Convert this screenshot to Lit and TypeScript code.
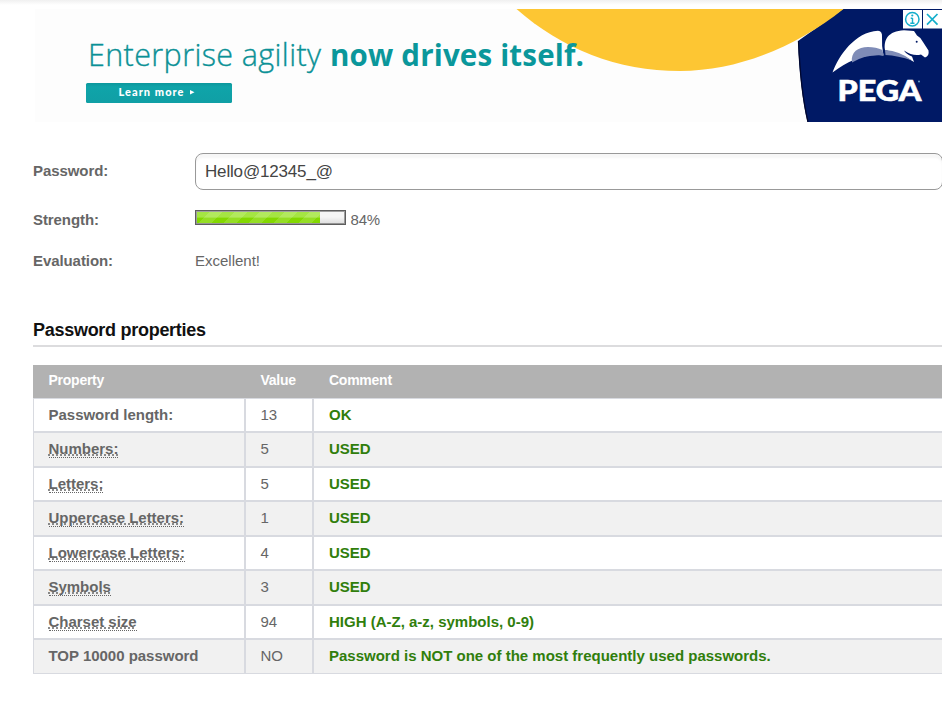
import { LitElement, html, css } from "lit";
import { customElement, property } from "lit/decorators.js";
import { classMap } from "lit/directives/class-map.js";

interface Row {
  name: string;
  value: string;
  comment: string;
  hint?: boolean;
}

const ROWS: Row[] = [
  { name: "Password length:", value: "13", comment: "OK" },
  { name: "Numbers:", value: "5", comment: "USED", hint: true },
  { name: "Letters:", value: "5", comment: "USED", hint: true },
  { name: "Uppercase Letters:", value: "1", comment: "USED", hint: true },
  { name: "Lowercase Letters:", value: "4", comment: "USED", hint: true },
  { name: "Symbols", value: "3", comment: "USED", hint: true },
  { name: "Charset size", value: "94", comment: "HIGH (A-Z, a-z, symbols, 0-9)", hint: true },
  { name: "TOP 10000 password", value: "NO", comment: "Password is NOT one of the most frequently used passwords." },
];

@customElement("ad-banner")
class AdBanner extends LitElement {
  static styles = css`
    :host { display: block; height: 113px; }
    svg { display: block; }
    .headline { font-family: "Open Sans", sans-serif; font-size: 30.500px; fill: #0b9196; }
    .light { font-weight: 300; stroke: #0b9196; stroke-width: 0.350px; }
    .strong { font-weight: 700; font-size: 29.500px; fill: #0a979b; }
    .cta { font: 900 11px Lato, sans-serif; fill: #fff; }
    .brand { font: 900 29px Lato, sans-serif; fill: #fff; stroke: #fff; stroke-width: 0.600px; }
  `;
  render() {
    return html`
      <svg width="907" height="113" viewBox="35 9 907 113">
        <defs>
          <linearGradient id="btn" x1="0" y1="0" x2="0" y2="1">
            <stop offset="0" stop-color="#0c979c" />
            <stop offset=".2" stop-color="#0fa4a9" />
            <stop offset="1" stop-color="#109fa5" />
          </linearGradient>
        </defs>
        <rect x="35" y="9" width="907" height="113" fill="#fdfdfd" />
        <path d="M798 41L843 9H942V122H807.500Q800 90 798 41Z" fill="#001965" />
        <path d="M798.500 41Q800.500 90 808 122" fill="none" stroke="#00072e" stroke-width="1.300" />
        <path d="M516.500 9C562 49 617 71 680 71C739 71 797 46 843.500 9Z" fill="#fdc633" />
        <text class="headline light" x="88" y="65.500" textLength="233">Enterprise agility</text>
        <text class="headline strong" x="330" y="65.500" textLength="254">now drives itself.</text>
        <rect x="86" y="83" width="146" height="20" rx="1.500" fill="url(#btn)" />
        <text class="cta" x="118.500" y="96" textLength="65">Learn more</text>
        <path d="M190 90L194.500 92.200L190 94.500Z" fill="#fff" />
        <path d="M832.500 72.500C839 55 855 32 878 30.700Q882.500 31 882 37Q881.500 46 883.500 55.500C866 53 849 60 832.500 72.500Z" fill="#fff" />
        <path d="M852 62.500C850.500 52 858 47 868 47Q876 47 882.500 50L883.500 55.500Q866 54 852 62.500Z" fill="#7f8cb7" />
        <path d="M885 50C883.500 40 888 31 904 30.300L914 31L917 35.500Q921 37.500 923 42L928.500 50.500Q929.500 56 925 57.500L921 54.500Q913 56.500 904 50.500Q906 54 912 56.500L914 62Q900 53 885 50Z" fill="#fff" />
        <path d="M885 50Q900 51 912 60.500Q898 55.500 885.500 55Z" fill="#7f8cb7" />
        <circle cx="916.700" cy="41.700" r="1" fill="#001965" />
        <text class="brand" x="837.500" y="101" textLength="84" lengthAdjust="spacingAndGlyphs">PEGA</text>
        <circle cx="919" cy="81.500" r="1" fill="#6f9ec6" />
        <path d="M903 10H922V28.500H903ZM923 10H942V28.500H923Z" fill="#fff" />
        <g fill="none" stroke="#14aecb" stroke-width="1.500">
          <circle cx="912.300" cy="19.300" r="6.700" />
          <path d="M927 14L937.500 24.700M937.500 14L927 24.700" stroke-width="1.700" />
          <path d="M912.500 18V23.500M910.700 18.200H912.500M910.300 23.200H914.500" stroke-width="1.400" />
        </g>
        <circle cx="912.300" cy="15.500" r="1.100" fill="#14aecb" />
      </svg>
    `;
  }
}

@customElement("strength-meter")
class StrengthMeter extends LitElement {
  @property({ type: Number }) value = 0;
  static styles = css`
    :host { display: flex; gap: 4.500px; }
    .track {
      box-sizing: border-box; width: 151px; height: 15px; padding: 1px; border: 1px solid #5e5e5e;
      box-shadow: inset 0 0 0 1px rgba(90, 90, 90, .55);
      background: linear-gradient(#f6f6f6 45%, #dcdcdc);
      display: flex;
    }
    .fill {
      background:
        repeating-linear-gradient(135deg, transparent 0 8.800px, rgba(255,255,255,.14) 8.800px 17.700px),
        linear-gradient(#a5e544 0 45%, #83d800 58%);
    }
    .label { font-size: 15px; line-height: 20px; color: #666; letter-spacing: -.2px; }
  `;
  render() {
    return html`
      <div class="track"><div class="fill" style="width:${this.value}%"></div></div>
      <span class="label">${this.value}%</span>
    `;
  }
}

@customElement("app-root")
class AppRoot extends LitElement {
  static styles = css`
    :host {
      display: block; width: 942px; height: 709px; overflow: hidden; background: #fff;
      font-family: "Liberation Sans", Arial, sans-serif; font-size: 15px; color: #666;
    }
    .shade { height: 9px; background: linear-gradient(#f0f0f0, #fff 5px); }
    .banner { margin-left: 35px; }
    .form {
      display: grid; grid-template-columns: 162px 748px; grid-template-rows: 37px 59px 24px;
      margin: 31px 0 0 33px; line-height: 18px;
    }
    .label { font-weight: 700; letter-spacing: -.08px; }
    .first { padding-top: 9px; }
    .second { padding-top: 21px; }
    .third { padding-top: 3px; }
    .field {
      box-sizing: border-box; height: 37px; padding: 0 9px; border: 1px solid #999; border-radius: 8px;
      box-shadow: inset 0 4px 2px #f7f7f7; color: #444; font-size: 17px; line-height: 35px;
      letter-spacing: -.17px;
    }
    .meter { padding-top: 20px; }
    .title {
      margin: 46px 0 0 33px; height: 26px; border-bottom: 2px solid #dcdcde;
      font-size: 18px; line-height: 22px; font-weight: 700; color: #111; letter-spacing: -.28px;
    }
    .table { width: 940px; margin: 18px 0 0 33px; }
    .row { display: grid; grid-template-columns: 212px 68px 660px; height: 34px; line-height: 32px; }
    .row.tall { height: 35px; }
    .row.head {
      height: 33px; line-height: 31px; background: #b2b2b2; color: #fff;
      font-weight: 700; font-size: 14px; letter-spacing: -.25px;
    }
    .cell { box-sizing: border-box; padding-left: 14.500px; border: 1px solid #d8dae0; white-space: nowrap; }
    .head .cell { border: 0; padding-left: 15.500px; }
    .alt .cell { background: #f1f1f1; }
    .name { font-weight: 700; letter-spacing: -.02px; }
    .row .comment { padding-left: 15px; font-weight: 700; color: #307e0c; }
    .head .last { padding-left: 16px; }
    .hint { text-decoration: underline dotted #666; border-bottom: 1px dotted #666; }
  `;
  render() {
    return html`
      <div class="shade"></div>
      <ad-banner class="banner"></ad-banner>
      <div class="form">
        <div class="label first">Password:</div>
        <div class="field">Hello@12345_@</div>
        <div class="label second">Strength:</div>
        <strength-meter class="meter" .value=${84}></strength-meter>
        <div class="label third">Evaluation:</div>
        <div class="third">Excellent!</div>
      </div>
      <div class="title">Password properties</div>
      <div class="table">
        <div class="row head">
          <div class="cell">Property</div>
          <div class="cell">Value</div>
          <div class="cell last">Comment</div>
        </div>
        ${ROWS.map((r, i) => html`
          <div class=${classMap({ row: true, tall: i % 2 === 1, alt: i % 2 === 1 })}>
            <div class="cell name">${r.hint ? html`<span class="hint">${r.name}</span>` : r.name}</div>
            <div class="cell">${r.value}</div>
            <div class="cell comment">${r.comment}</div>
          </div>`)}
      </div>
    `;
  }
}
